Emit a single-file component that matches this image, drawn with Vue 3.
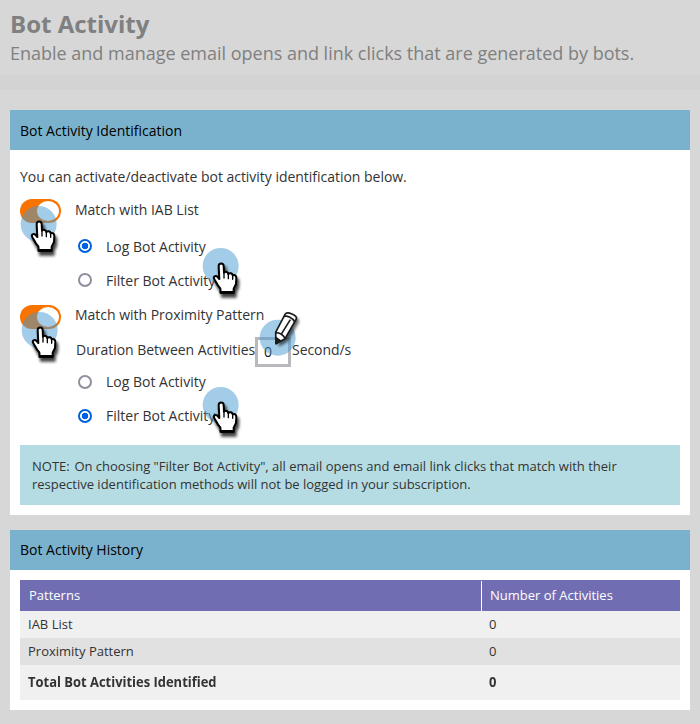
<script setup>
import { h, ref } from 'vue'

const iabMode = ref('log')
const proximityMode = ref('filter')
const duration = ref('0')

const modes = [
  { id: 'log', label: 'Log Bot Activity' },
  { id: 'filter', label: 'Filter Bot Activity' },
]

const history = [
  { name: 'IAB List', count: 0 },
  { name: 'Proximity Pattern', count: 0 },
]

const handPath =
  'M85 92 C85 82 100 82 100 92 L101 112 C106 107 113 110 114 116 C119 111 126 114 127 120 C133 117 138 121 138 128 L137 146 L130 160 L130 172 L91 172 L90 159 C84 153 80 147 77 140 L72 132 C67 124 76 119 82 125 L87 131 Z'

const HandPointer = () =>
  h('svg', { width: 44, height: 56, viewBox: '32 32 132 168', 'aria-hidden': 'true' }, [
    h('defs', [
      h('filter', { id: 'soft', x: '-50%', y: '-50%', width: '200%', height: '200%' }, [
        h('feGaussianBlur', { stdDeviation: 5 }),
      ]),
    ]),
    h('circle', { cx: 91, cy: 92, r: 54, fill: '#4699cf', 'fill-opacity': 0.5 }),
    h('g', { filter: 'url(#soft)', opacity: 0.75 }, [
      h('path', { d: handPath, transform: 'translate(5 11)', stroke: '#000', 'stroke-width': 8 }),
    ]),
    h('path', {
      d: handPath,
      fill: '#fff',
      stroke: '#000',
      'stroke-width': 6,
      'stroke-linejoin': 'round',
    }),
    h('path', {
      d: 'M101 112 V128 M114 117 V130 M127 121 V132',
      fill: 'none',
      stroke: '#000',
      'stroke-width': 4,
      'stroke-linecap': 'round',
    }),
    h('path', { d: 'M88 171 H132', stroke: '#000', 'stroke-width': 8 }),
  ])
</script>

<template>
  <main class="page">
    <header class="page-header">
      <h1>Bot Activity</h1>
      <p>Enable and manage email opens and link clicks that are generated by bots.</p>
    </header>

    <section class="panel">
      <h2>Bot Activity Identification</h2>
      <div class="panel-body">
        <div class="row intro">You can activate/deactivate bot activity identification below.</div>
        <div class="row match">
          <span class="toggle"><i></i></span>
          <span class="match-label">Match with IAB List</span>
          <HandPointer class="pointer on-toggle" />
        </div>
        <div v-for="m in modes" :key="m.id" class="row option" :class="m.id">
          <span class="radio" :class="{ checked: iabMode === m.id }" @click="iabMode = m.id"></span>
          <span class="option-label">{{ m.label }}</span>
          <HandPointer v-if="m.id === 'filter'" class="pointer on-option" />
        </div>
        <div class="row match second">
          <span class="toggle"><i></i></span>
          <span class="match-label">Match with Proximity Pattern</span>
          <HandPointer class="pointer on-toggle" />
        </div>
        <div class="row duration">
          <span class="duration-label">Duration Between Activities</span>
          <span class="number-box">{{ duration }}</span>
          <span class="unit">Second/s</span>
          <svg class="pencil" width="48" height="50" viewBox="54 24 144 150" aria-hidden="true">
            <circle cx="113" cy="113" r="54" fill="#4699cf" fill-opacity="0.5" />
            <g filter="url(#soft)" opacity="0.6">
              <path d="M107 97 L135 43 C141 33 173 45 169 57 L135 116 L108 131 Z" transform="translate(8 9)" />
            </g>
            <g stroke="#1b1b1b" stroke-width="5" stroke-linejoin="round">
              <path d="M107 97 L135 43 C141 33 173 45 169 57 L135 116 L108 131 Z" fill="#fff" />
              <path d="M132 50 C139 45 158 52 164 66 M107 98 C118 98 129 104 135 115 M151 59 L123 104" fill="none" />
              <path d="M107 112 L120 121 L108 131 Z" fill="#1b1b1b" />
            </g>
          </svg>
        </div>
        <div v-for="m in modes" :key="'p' + m.id" class="row option low" :class="m.id">
          <span class="radio" :class="{ checked: proximityMode === m.id }" @click="proximityMode = m.id"></span>
          <span class="option-label">{{ m.label }}</span>
          <HandPointer v-if="m.id === 'filter'" class="pointer on-option" />
        </div>
        <div class="note">
          NOTE:&#8202; On choosing "Filter Bot Activity", all email opens and email link clicks that match with their respective identification methods will not be logged in your subscription.
        </div>
      </div>
    </section>

    <section class="panel history">
      <h2>Bot Activity History</h2>
      <div class="panel-body">
        <div class="table">
          <div class="tr head"><span>Patterns</span><span>Number of Activities</span></div>
          <div v-for="r in history" :key="r.name" class="tr"><span>{{ r.name }}</span><span>{{ r.count }}</span></div>
          <div class="tr total"><span>Total Bot Activities Identified</span><span>0</span></div>
        </div>
      </div>
    </section>
  </main>
</template>

<style>
body {
  margin: 0;
  background: #d7d7d7;
}
</style>

<style scoped>
* {
  box-sizing: border-box;
}
.page {
  height: 724px;
  overflow: hidden;
  background: #d7d7d7;
  color: #333;
  font: 14px/20px "Open Sans", sans-serif;
}
.page-header {
  height: 90px;
  padding: 8px 10px 0;
  border-bottom: 15px solid #d3d3d3;
  color: #808080;
}
h1 {
  margin: 0;
  padding-bottom: 2px;
  font-size: 24px;
  line-height: 31px;
  font-weight: 700;
}
.page-header p {
  margin: 0;
  font-size: 18px;
  line-height: 25px;
  letter-spacing: -0.008px;
  white-space: nowrap;
}
.panel {
  margin: 20px 10px 0;
  background: #fff;
}
.panel.history {
  margin-top: 15px;
}
h2 {
  height: 40px;
  margin: 0;
  padding: 0 10px;
  background: #7ab2cd;
  color: #000;
  font-size: 14px;
  line-height: 41px;
  font-weight: 400;
}
.history h2 {
  line-height: 39px;
}
.panel-body {
  padding: 10px;
}
.row {
  position: relative;
  display: flex;
  align-items: center;
  height: 34px;
  white-space: nowrap;
}
.intro {
  letter-spacing: -0.025px;
}
.toggle {
  display: flex;
  justify-content: flex-end;
  width: 41px;
  height: 24px;
  padding: 2px;
  border-radius: 12px;
  background: #f97300;
}
.toggle i {
  width: 22px;
  height: 20px;
  border-radius: 50%;
  background: #fff;
}
.match-label {
  margin: -2px 0 0 14px;
}
.match.second .toggle {
  margin-top: 4px;
}
.match.second .match-label {
  margin-top: 0;
  letter-spacing: -0.02px;
}
.option {
  gap: 14px;
  padding-left: 58px;
}
.option.log {
  height: 36px;
}
.option.filter .radio {
  margin-top: -2px;
}
.option.log .option-label {
  padding-top: 2px;
}
.option.low.log {
  height: 32px;
}
.option.low.log .option-label {
  padding-top: 0;
}
.option.low.filter {
  height: 36px;
}
.option.low.filter .radio {
  margin-top: 0;
}
.radio {
  width: 14px;
  height: 14px;
  border: 2px solid #8f8f9d;
  border-radius: 50%;
  background: #fff;
}
.radio.checked {
  border-color: #0061e0;
  background: radial-gradient(circle, #0061e0 0 3px, #fff 3.6px);
}
.pointer {
  position: absolute;
  z-index: 2;
  overflow: visible;
}
.on-toggle {
  left: -1px;
  top: 10px;
}
.second .on-toggle {
  left: 0;
  top: 12px;
}
.on-option {
  left: 181px;
  top: -18px;
}
.low .on-option {
  top: -13px;
}
.duration {
  padding-left: 56px;
}
.duration-label {
  width: 179px;
  padding-top: 2px;
  letter-spacing: -0.02px;
}
.number-box {
  width: 36px;
  height: 30px;
  margin-top: 6px;
  padding-left: 6px;
  border: 3px solid #b8b8bd;
  background: #fff;
  line-height: 24px;
  color: #111;
}
.unit {
  margin-left: 1px;
  padding-top: 2px;
  letter-spacing: -0.05px;
}
.pencil {
  position: absolute;
  left: 238px;
  top: -24px;
  overflow: visible;
}
.note {
  height: 60px;
  margin: 11px 0 0;
  padding: 12px 50px 0 12px;
  background: #b6dce3;
  font-size: 13px;
  line-height: 18px;
}
.table {
  font-size: 13px;
}
.tr {
  display: grid;
  grid-template-columns: 461px 1fr;
  height: 27px;
  background: #f0f0f0;
  line-height: 27px;
}
.tr span {
  padding-left: 8px;
}
.tr:nth-child(3) {
  background: #e1e1e1;
}
.tr.head {
  height: 31px;
  padding-top: 1px;
  background: #716db2;
  color: #fff;
  line-height: 29px;
}
.head span {
  padding-left: 9px;
}
.head span + span {
  padding-left: 8px;
  border-left: 1px solid #fff;
}
.tr.total {
  height: 35px;
  font-size: 14px;
  font-weight: 700;
  line-height: 34px;
}
.total span {
  transform: scaleX(0.925);
  transform-origin: 8px 50%;
}
</style>
